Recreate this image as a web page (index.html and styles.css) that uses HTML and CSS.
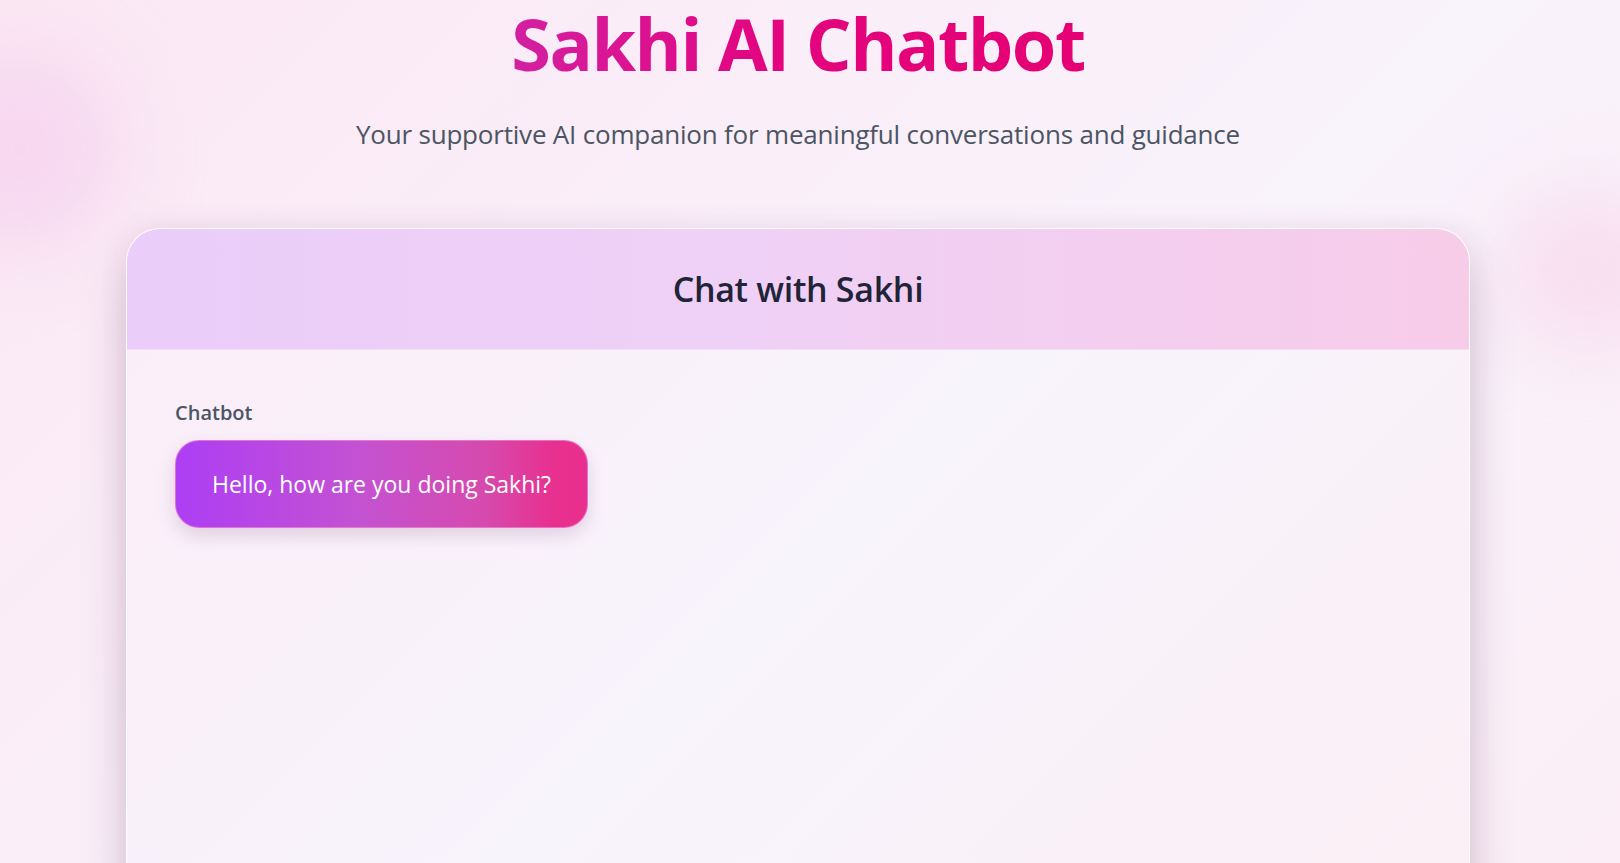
FILE: index.html
```html
<!DOCTYPE html>
<html lang="en">
<head>
<meta charset="utf-8">
<title>Sakhi AI Chatbot</title>
<link rel="stylesheet" href="styles.css">
</head>
<body>
<div class="blob blob-left"></div>
<div class="blob blob-right"></div>
<main class="page">
  <header class="hero">
    <h1 class="title">Sakhi AI Chatbot</h1>
    <p class="subtitle">Your supportive AI companion for meaningful conversations and guidance</p>
  </header>
  <section class="card">
    <div class="card-head">
      <h2 class="card-title">Chat with Sakhi</h2>
    </div>
    <div class="card-body">
      <div class="label">Chatbot</div>
      <div class="bubble">Hello, how are you doing Sakhi?</div>
    </div>
  </section>
</main>
</body>
</html>
```

FILE: styles.css
```css
html, body {
  margin: 0;
  padding: 0;
  height: 100%;
  overflow: hidden;
}
body {
  font-family: "Open Sans", "Noto Sans", sans-serif;
  background: linear-gradient(135deg, #fbe8f4 0%, #faeef8 35%, #f9f3fc 60%, #fbeef6 100%);
  position: relative;
}
.blob {
  position: absolute;
  border-radius: 50%;
  filter: blur(40px);
  pointer-events: none;
}
.blob-left {
  left: -80px;
  top: 50px;
  width: 200px;
  height: 200px;
  background: rgba(244, 200, 236, 0.55);
}
.blob-right {
  right: -60px;
  top: 190px;
  width: 180px;
  height: 160px;
  background: rgba(247, 210, 232, 0.6);
}
.page {
  position: relative;
  width: 1596px;
  display: flex;
  flex-direction: column;
  align-items: center;
}
.hero {
  text-align: center;
}
.title {
  margin: 0;
  font-size: 72px;
  line-height: 86px;
  font-weight: 700;
  letter-spacing: -1.5px;
  background: linear-gradient(90deg, #bf2bbb 0%, #d61c9c 22%, #e3047e 48%, #e6006e 100%);
  -webkit-background-clip: text;
  background-clip: text;
  color: transparent;
}
.subtitle {
  margin: 30px 0 0;
  font-size: 26px;
  line-height: 36px;
  color: #4b5563;
  letter-spacing: -0.2px;
}
.card {
  margin-top: 76px;
  width: 1344px;
  border-radius: 34px 34px 0 0;
  overflow: hidden;
  border: 1px solid rgba(255, 255, 255, 0.8);
  border-bottom: none;
  box-sizing: border-box;
  background: linear-gradient(135deg, #fbedf8 0%, #f8f4fc 50%, #fbeff5 100%);
  box-shadow: 0 25px 50px -6px rgba(80, 30, 70, 0.26), 0 0 30px rgba(120, 60, 110, 0.08);
  height: 700px;
}
.card-head {
  height: 120px;
  display: flex;
  align-items: center;
  justify-content: center;
  background: linear-gradient(90deg, #eacdf9 0%, #efd0f6 45%, #f7cce9 100%);
  border-bottom: 1px solid #f3def3;
}
.card-title {
  margin: 0;
  font-size: 34px;
  font-weight: 600;
  color: #1f2437;
  letter-spacing: -0.3px;
}
.card-body {
  padding: 50px 48px;
  display: flex;
  flex-direction: column;
  align-items: flex-start;
}
.label {
  font-size: 20px;
  font-weight: 600;
  color: #4b5563;
  line-height: 26px;
}
.bubble {
  margin-top: 14px;
  box-sizing: border-box;
  width: 413px;
  height: 88px;
  display: flex;
  align-items: center;
  justify-content: center;
  border-radius: 24px;
  border: 1px solid rgba(236, 140, 210, 0.7);
  background: linear-gradient(90deg, #ad3ef4 0%, #c452d2 45%, #d64aae 75%, #e8308f 92%, #e92f8e 100%);
  color: #ffffff;
  font-size: 23px;
  letter-spacing: 0;
  box-shadow: 0 8px 18px rgba(120, 60, 120, 0.18);
}
```
